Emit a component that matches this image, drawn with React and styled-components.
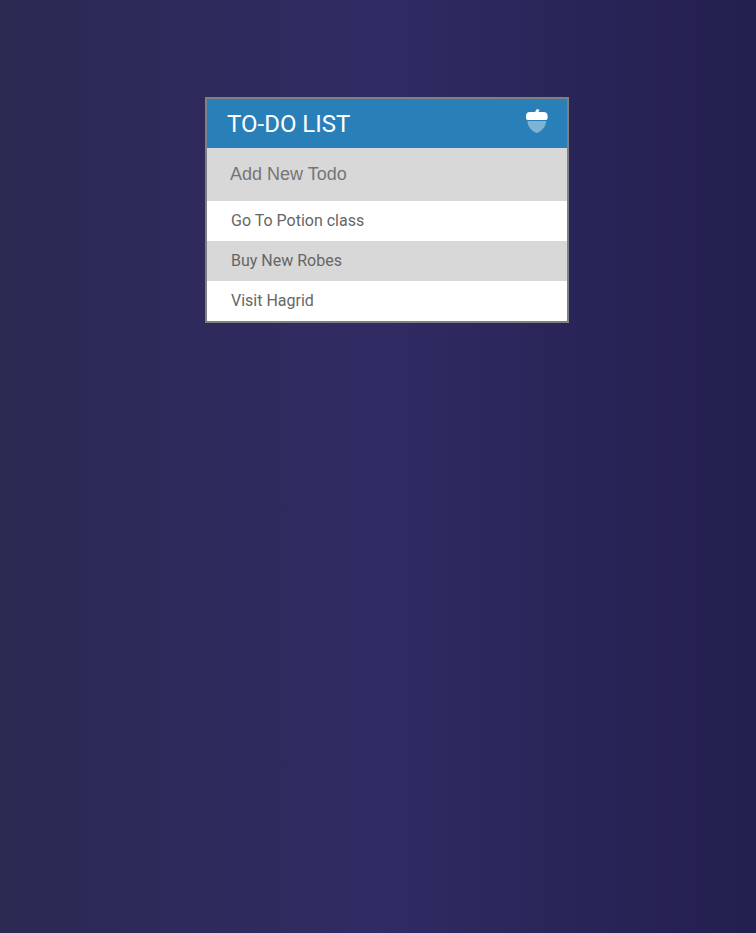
import React, { useState } from "react";
import styled, { createGlobalStyle } from "styled-components";

const GlobalStyle = createGlobalStyle`
  * { box-sizing: border-box; }
  body {
    margin: 0;
    min-height: 100vh;
    background: linear-gradient(to right, #2c2953 0%, #302b63 50%, #231f4e 100%);
    font-family: Roboto, "Liberation Sans", sans-serif;
  }
`;

const Page = styled.main`
  display: flex;
  justify-content: center;
  padding: 97px 20px 20px 38px;
`;

const Card = styled.section`
  width: 100%;
  max-width: 364px;
  border: 2px solid #808080;
  background: #f7f7f7;
`;

const Header = styled.header`
  display: flex;
  justify-content: space-between;
  align-items: flex-start;
  padding: 10px 19px 8px 20px;
  background: #2980b9;
  color: #fff;
`;

const Title = styled.h1`
  margin: 0;
  font-size: 24px;
  font-weight: 400;
  line-height: 31px;
`;

const ToggleButton = styled.button`
  display: flex;
  padding: 0;
  border: 0;
  background: none;
  color: inherit;
  cursor: pointer;
`;

const NewTodo = styled.input`
  display: block;
  width: 100%;
  height: 53px;
  padding: 0 23px;
  border: 0;
  border-radius: 0;
  background: #d8d8d8;
  color: #2980b9;
  font-family: "Liberation Sans", Arial, sans-serif;
  font-size: 18px;
  &::placeholder { color: #757575; opacity: 1; }
`;

const List = styled.ul`
  margin: 0;
  padding: 0;
  list-style: none;
`;

const Item = styled.li`
  height: 40px;
  padding: 0 24px;
  background: #fff;
  color: #666;
  font-size: 16px;
  line-height: 40px;
  &:nth-child(2n) { background: #d8d8d8; }
`;

const AcornIcon = () => (
  <svg width="22" height="24" viewBox="0 0 22 24" fill="currentColor" aria-hidden="true">
    <path opacity="0.4" d="M1.500 12h18.500c0 5.200-3.300 9.100-7.400 11.200L10.700 24l-1.800-.8C4.800 21.100 1.500 17.200 1.500 12z" />
    <path d="M21.600 7v2.200A1.800 1.800 0 0 1 19.800 11H1.800A1.800 1.800 0 0 1 0 9.200V7a4 4 0 0 1 4-4h5.200c.3-1 .9-1.900 1.700-2.700a.7.7 0 0 1 1-.1l1.100.7a.7.7 0 0 1 .2 1c-.4.400-.6.700-.8 1.100h5.200a4 4 0 0 1 4 4z" />
  </svg>
);

export default function App() {
  const [todos, setTodos] = useState(["Go To Potion class", "Buy New Robes", "Visit Hagrid"]);
  const [text, setText] = useState("");
  const [open, setOpen] = useState(true);
  const addTodo = (event) => {
    event.preventDefault();
    if (!text.trim()) return;
    setTodos([...todos, text.trim()]);
    setText("");
  };

  return (
    <>
      <GlobalStyle />
      <Page>
        <Card>
          <Header>
            <Title>TO-DO LIST</Title>
            <ToggleButton type="button" aria-label="Toggle new todo" onClick={() => setOpen(!open)}>
              <AcornIcon />
            </ToggleButton>
          </Header>
          {open && (
            <form onSubmit={addTodo}>
              <NewTodo
                type="text"
                aria-label="Add New Todo"
                placeholder="Add New Todo"
                value={text}
                onChange={(event) => setText(event.target.value)}
              />
            </form>
          )}
          <List>
            {todos.map((todo, index) => (
              <Item key={index}>{todo}</Item>
            ))}
          </List>
        </Card>
      </Page>
    </>
  );
}
